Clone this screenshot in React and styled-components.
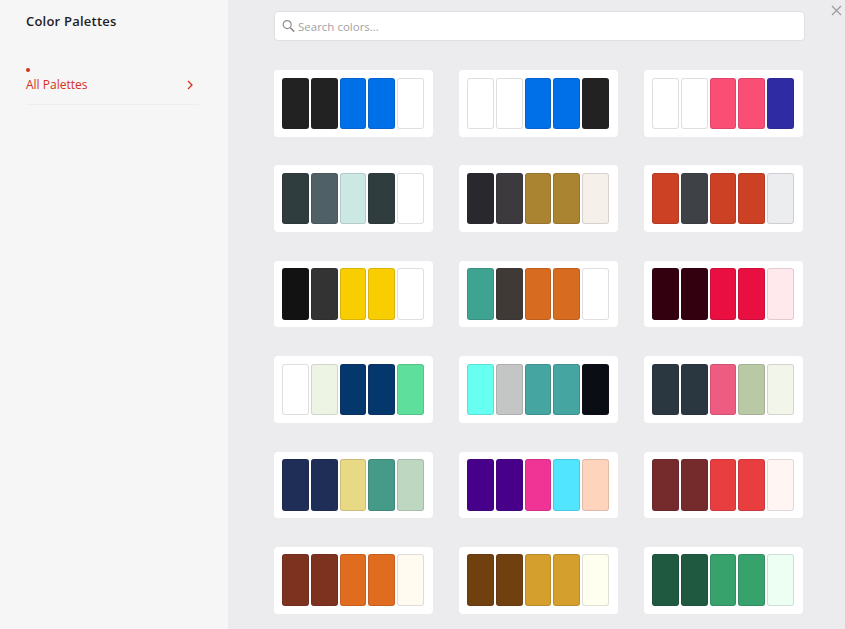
import React from 'react';
import styled, { createGlobalStyle } from 'styled-components';

const GlobalStyle = createGlobalStyle`
  html, body {
    margin: 0;
    padding: 0;
    height: 100%;
    overflow: hidden;
    font-family: "Open Sans", "Noto Sans", sans-serif;
  }
  * { box-sizing: border-box; }
`;

const Page = styled.div`
  position: relative;
  display: grid;
  grid-template-columns: 228px 1fr;
  height: 629px;
  overflow: hidden;
  background: #ecebed;
`;

const Sidebar = styled.aside`
  background: #f6f6f7;
  padding: 12px 29px 0 26px;
`;

const Title = styled.h1`
  margin: 0 0 38px;
  font-size: 13px;
  line-height: 18px;
  font-weight: 600;
  letter-spacing: 0.22px;
  color: #1e1c22;
`;

const Dot = styled.span`
  display: block;
  width: 4px;
  height: 4px;
  margin-bottom: 3px;
  border-radius: 50%;
  background: #d4301a;
`;

const NavItem = styled.a`
  display: flex;
  align-items: center;
  justify-content: space-between;
  height: 30px;
  padding: 0 5px 10px 0;
  border-bottom: 1px solid #eeeeef;
  font-size: 12px;
  line-height: 17px;
  color: #d4301a;
`;

const Main = styled.main`
  padding: 11px 40px 0 46px;
`;

const SearchBox = styled.label`
  display: flex;
  align-items: center;
  gap: 1px;
  width: 531px;
  height: 30px;
  margin-bottom: 29px;
  padding: 0 7px;
  background: #fff;
  border: 1px solid #dfdee0;
  border-radius: 4px;
  color: #8f8d91;
`;

const SearchInput = styled.input`
  flex: 1;
  min-width: 0;
  border: 0;
  outline: 0;
  padding: 0;
  background: transparent;
  font: 11.5px "Open Sans", sans-serif;
  color: #333;

  &::placeholder {
    color: #a3a1a5;
    opacity: 1;
  }
`;

const PaletteGrid = styled.div`
  display: grid;
  grid-template-columns: repeat(3, 159px);
  column-gap: 26px;
  row-gap: 28.8px;
`;

const PaletteCard = styled.div`
  display: flex;
  gap: 2px;
  height: 66.6px;
  padding: 7.5px 9px 7.5px 8px;
  background: #fff;
  border-radius: 4px;
`;

const Swatch = styled.span`
  flex: 1;
  border-radius: 3px;
  background: ${({ $color }) => $color};
  box-shadow: inset 0 0 0 1px rgba(40, 20, 50, 0.14);
`;

const CloseButton = styled.button`
  position: absolute;
  top: 4px;
  right: 2px;
  display: flex;
  width: 13px;
  height: 13px;
  padding: 0;
  border: 0;
  background: transparent;
  color: #9b9a9e;
`;

const palettes = [
  ['#222222', '#222222', '#0070e8', '#0070e8', '#ffffff'],
  ['#ffffff', '#ffffff', '#0070e8', '#0070e8', '#222222'],
  ['#ffffff', '#ffffff', '#fb4e74', '#fb4e74', '#2f2ca3'],
  ['#2f3d3e', '#4f6166', '#cce8e3', '#2f3d3e', '#ffffff'],
  ['#29282c', '#3c3a3d', '#ab8432', '#ab8432', '#f5f0e9'],
  ['#cc4123', '#3e4247', '#cc4123', '#cc4123', '#ecedef'],
  ['#121212', '#333333', '#f9ce00', '#f9ce00', '#ffffff'],
  ['#3ea391', '#403a37', '#d76c20', '#d76c20', '#ffffff'],
  ['#330010', '#330010', '#e90f40', '#e90f40', '#ffe9ed'],
  ['#ffffff', '#edf4e4', '#04376b', '#04376b', '#5ee09c'],
  ['#66fff0', '#c4c6c6', '#45a5a1', '#45a5a1', '#0b0d14'],
  ['#2a3640', '#2a3640', '#ee5c82', '#b9c9a6', '#f2f5e9'],
  ['#1f2e57', '#1f2e57', '#e8d985', '#459b87', '#bdd7c0'],
  ['#46008a', '#46008a', '#f03495', '#52e5ff', '#ffd4bd'],
  ['#752a2c', '#752a2c', '#e83e40', '#e83e40', '#fff6f4'],
  ['#7c321e', '#7c321e', '#e06c1f', '#e06c1f', '#fffbf0'],
  ['#70400f', '#70400f', '#d49f2c', '#d49f2c', '#ffffef'],
  ['#1f5940', '#1f5940', '#37a26b', '#37a26b', '#edfff3'],
];

const App = () => (
  <Page>
    <GlobalStyle />
    <Sidebar>
      <Title>Color Palettes</Title>
      <Dot />
      <NavItem>
        All Palettes
        <svg width="8" height="10" viewBox="0 0 8 10" fill="none" stroke="currentColor" strokeWidth="1.3">
          <path d="M2 1l4 4-4 4" />
        </svg>
      </NavItem>
    </Sidebar>
    <Main>
      <SearchBox>
        <svg width="15" height="15" viewBox="0 0 15 15" fill="none" stroke="currentColor" strokeWidth="1.2">
          <circle cx="5.2" cy="5.6" r="4" />
          <path d="M8.2 8.6l4 4" strokeWidth="1.5" />
        </svg>
        <SearchInput placeholder="Search colors..." />
      </SearchBox>
      <PaletteGrid>
        {palettes.map((colors, i) => (
          <PaletteCard key={i}>
            {colors.map((color, j) => (
              <Swatch key={j} $color={color} />
            ))}
          </PaletteCard>
        ))}
      </PaletteGrid>
    </Main>
    <CloseButton aria-label="Close">
      <svg width="13" height="13" viewBox="0 0 13 13" fill="none" stroke="currentColor" strokeWidth="1.2">
        <path d="M2 2l9 9M11 2l-9 9" />
      </svg>
    </CloseButton>
  </Page>
);

export default App;
